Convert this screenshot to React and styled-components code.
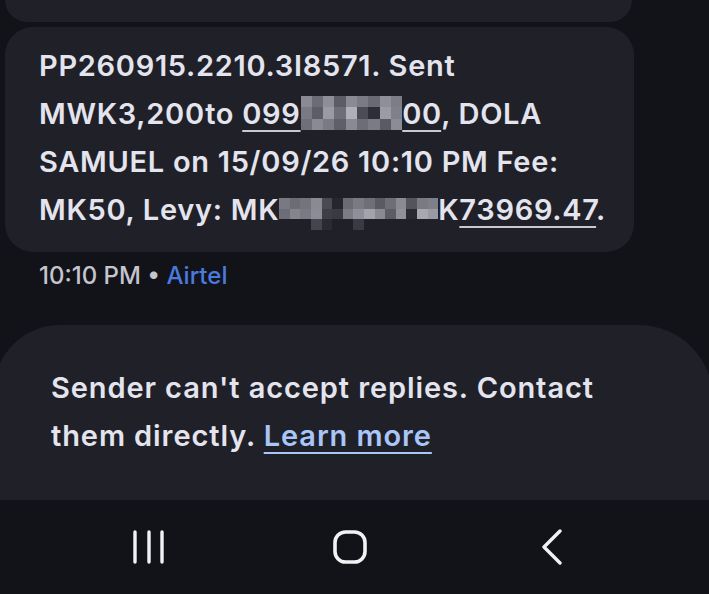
import React from "react";
import styled, { createGlobalStyle } from "styled-components";

const GlobalStyle = createGlobalStyle`
  html, body {
    margin: 0;
    padding: 0;
    background: #121319;
    overflow: hidden;
  }
  body {
    font-family: "Inter", "Open Sans", sans-serif;
    -webkit-font-smoothing: antialiased;
  }
`;

const Screen = styled.div`
  width: 709px;
  height: 594px;
  display: flex;
  flex-direction: column;
  background: #121319;
  overflow: hidden;
`;

const Thread = styled.div`
  flex: 1;
  display: flex;
  flex-direction: column;
  padding-left: 5px;
`;

const PrevBubble = styled.div`
  width: 627px;
  height: 22px;
  margin-bottom: 5px;
  background: #1f2028;
  border-radius: 0 0 28px 28px;
`;

const Bubble = styled.div`
  width: 629px;
  box-sizing: border-box;
  padding: 15px 10px 18px 34px;
  background: #1f2028;
  border-radius: 28px;
  color: #e4e4ee;
  font-size: 29px;
  font-weight: 600;
  line-height: 48px;
  letter-spacing: 0.7px;
  white-space: nowrap;
`;

const Link = styled.span`
  text-decoration: underline;
  text-decoration-thickness: 2px;
  text-underline-offset: 6px;
  text-decoration-color: #c9c9d3;
`;

const Mosaic = styled.span`
  display: inline-block;
  overflow: hidden;
  width: ${(p) => p.$cols * p.$size}px;
  height: ${(p) => p.$rows * p.$size}px;
  vertical-align: ${(p) => p.$drop}px;
  line-height: 0;
`;

const MosaicGrid = styled.span`
  display: grid;
  grid-template-columns: repeat(${(p) => p.$cols}, ${(p) => p.$size}px);
  grid-auto-rows: ${(p) => p.$size}px;
`;

const Cell = styled.span`
  background: ${(p) => p.$c};
`;

const Meta = styled.div`
  margin: 12px 0 0 34px;
  font-size: 24px;
  font-weight: 500;
  line-height: 24px;
  color: #c4c5cf;
`;

const Carrier = styled.span`
  color: #4a7adf;
`;

const Notice = styled.div`
  margin: 37px -4px 0 -6px;
  height: 176px;
  box-sizing: border-box;
  padding: 39px 20px 0 57px;
  background: #1f2028;
  border-radius: 66px 74px 0 0;
  color: #e4e4ee;
  font-size: 29px;
  font-weight: 600;
  line-height: 48px;
  letter-spacing: 0.9px;
  white-space: nowrap;
`;

const LearnMore = styled.span`
  color: #a9c6f8;
  text-decoration: underline;
  text-decoration-thickness: 2px;
  text-underline-offset: 6px;
`;

const NavBar = styled.nav`
  height: 95px;
  display: flex;
  align-items: center;
  padding-left: 133px;
  background: #121318;
`;

const NavIcon = styled.svg`
  display: block;
  flex: none;
  margin-left: ${(p) => p.$gap || 0}px;
  color: #f2f2f4;
`;

const phoneCells = [
  "#8a8a94", "#6c6c76", "#8e8e98", "#5c5c66", "#8a8a94", "#7b7b85", "#6a6a74", "#8f8f99", "#7d7d87",
  "#7a7a84", "#5d5d67", "#9a9aa4", "#6e6e78", "#b0b0ba", "#4c4c56", "#2e2e38", "#9b9ba5", "#80808a",
  "#6f6f79", "#8a8a94", "#7a7a84", "#5f5f69", "#8a8a94", "#6d6d77", "#7b7b85", "#5a5a64", "#8c8c96",
];

const levyCells = [
  "#797983", "#6c6c76", "#74747e", "#8a8a94", "#4a4a54", "#26262e", "#6b6b75", "#7a7a84", "#6f6f79", "#5a5a64", "#6e6e78", "#8a8a94", "#54545e", "#7a7a84", "#80808a",
  "#6d6d77", "#858590", "#7a7a84", "#8c8c96", "#3e3e48", "#3a3a44", "#7c7c86", "#8f8f99", "#a3a3ad", "#8a8a94", "#5c5c66", "#909099", "#2a2a32", "#a8a8b2", "#9a9aa4",
  "#1f2028", "#1f2028", "#1f2028", "#45454f", "#2a2a32", "#1f2028", "#1f2028", "#3a3a44", "#1f2028", "#1f2028", "#1f2028", "#1f2028", "#1f2028", "#1f2028", "#1f2028",
];

const Pixels = ({ cells, cols, size, drop }) => (
  <Mosaic $cols={cols} $size={size} $rows={Math.ceil(cells.length / cols)} $drop={drop}>
    <MosaicGrid $cols={cols} $size={size}>
      {cells.map((c, i) => (
        <Cell key={i} $c={c} />
      ))}
    </MosaicGrid>
  </Mosaic>
);

const App = () => {
  return (
    <Screen>
      <GlobalStyle />
      <Thread>
        <PrevBubble />
        <Bubble>
          PP260915.2210.3I8571. Sent
          <br />
          MWK3,200to{" "}
          <Link>
            099
            <Pixels cells={phoneCells} cols={9} size={11.3} drop={-6} />
            00
          </Link>
          , DOLA
          <br />
          SAMUEL on 15/09/26 10:10 PM Fee:
          <br />
          MK50, Levy: MK
          <Pixels cells={levyCells} cols={15} size={10.6} drop={-10} />
          K<Link>73969.47</Link>.
        </Bubble>
        <Meta>
          10:10 PM • <Carrier>Airtel</Carrier>
        </Meta>
      </Thread>
      <Notice>
        Sender can't accept replies. Contact
        <br />
        them directly. <LearnMore>Learn more</LearnMore>
      </Notice>
      <NavBar>
        <NavIcon width="32" height="34" viewBox="0 0 32 34">
          <g stroke="currentColor" strokeWidth="3.4" strokeLinecap="round">
            <line x1="2" y1="2" x2="2" y2="32" />
            <line x1="16" y1="2" x2="16" y2="32" />
            <line x1="29" y1="2" x2="29" y2="32" />
          </g>
        </NavIcon>
        <NavIcon $gap={168} width="34" height="34" viewBox="0 0 34 34">
          <rect x="2" y="2" width="30" height="30" rx="10.5" fill="none" stroke="currentColor" strokeWidth="3.6" />
        </NavIcon>
        <NavIcon $gap={174} width="22" height="36" viewBox="0 0 22 36">
          <polyline points="19,2 3,18 19,34" fill="none" stroke="currentColor" strokeWidth="3.4" strokeLinecap="round" strokeLinejoin="round" />
        </NavIcon>
      </NavBar>
    </Screen>
  );
};

export default App;
